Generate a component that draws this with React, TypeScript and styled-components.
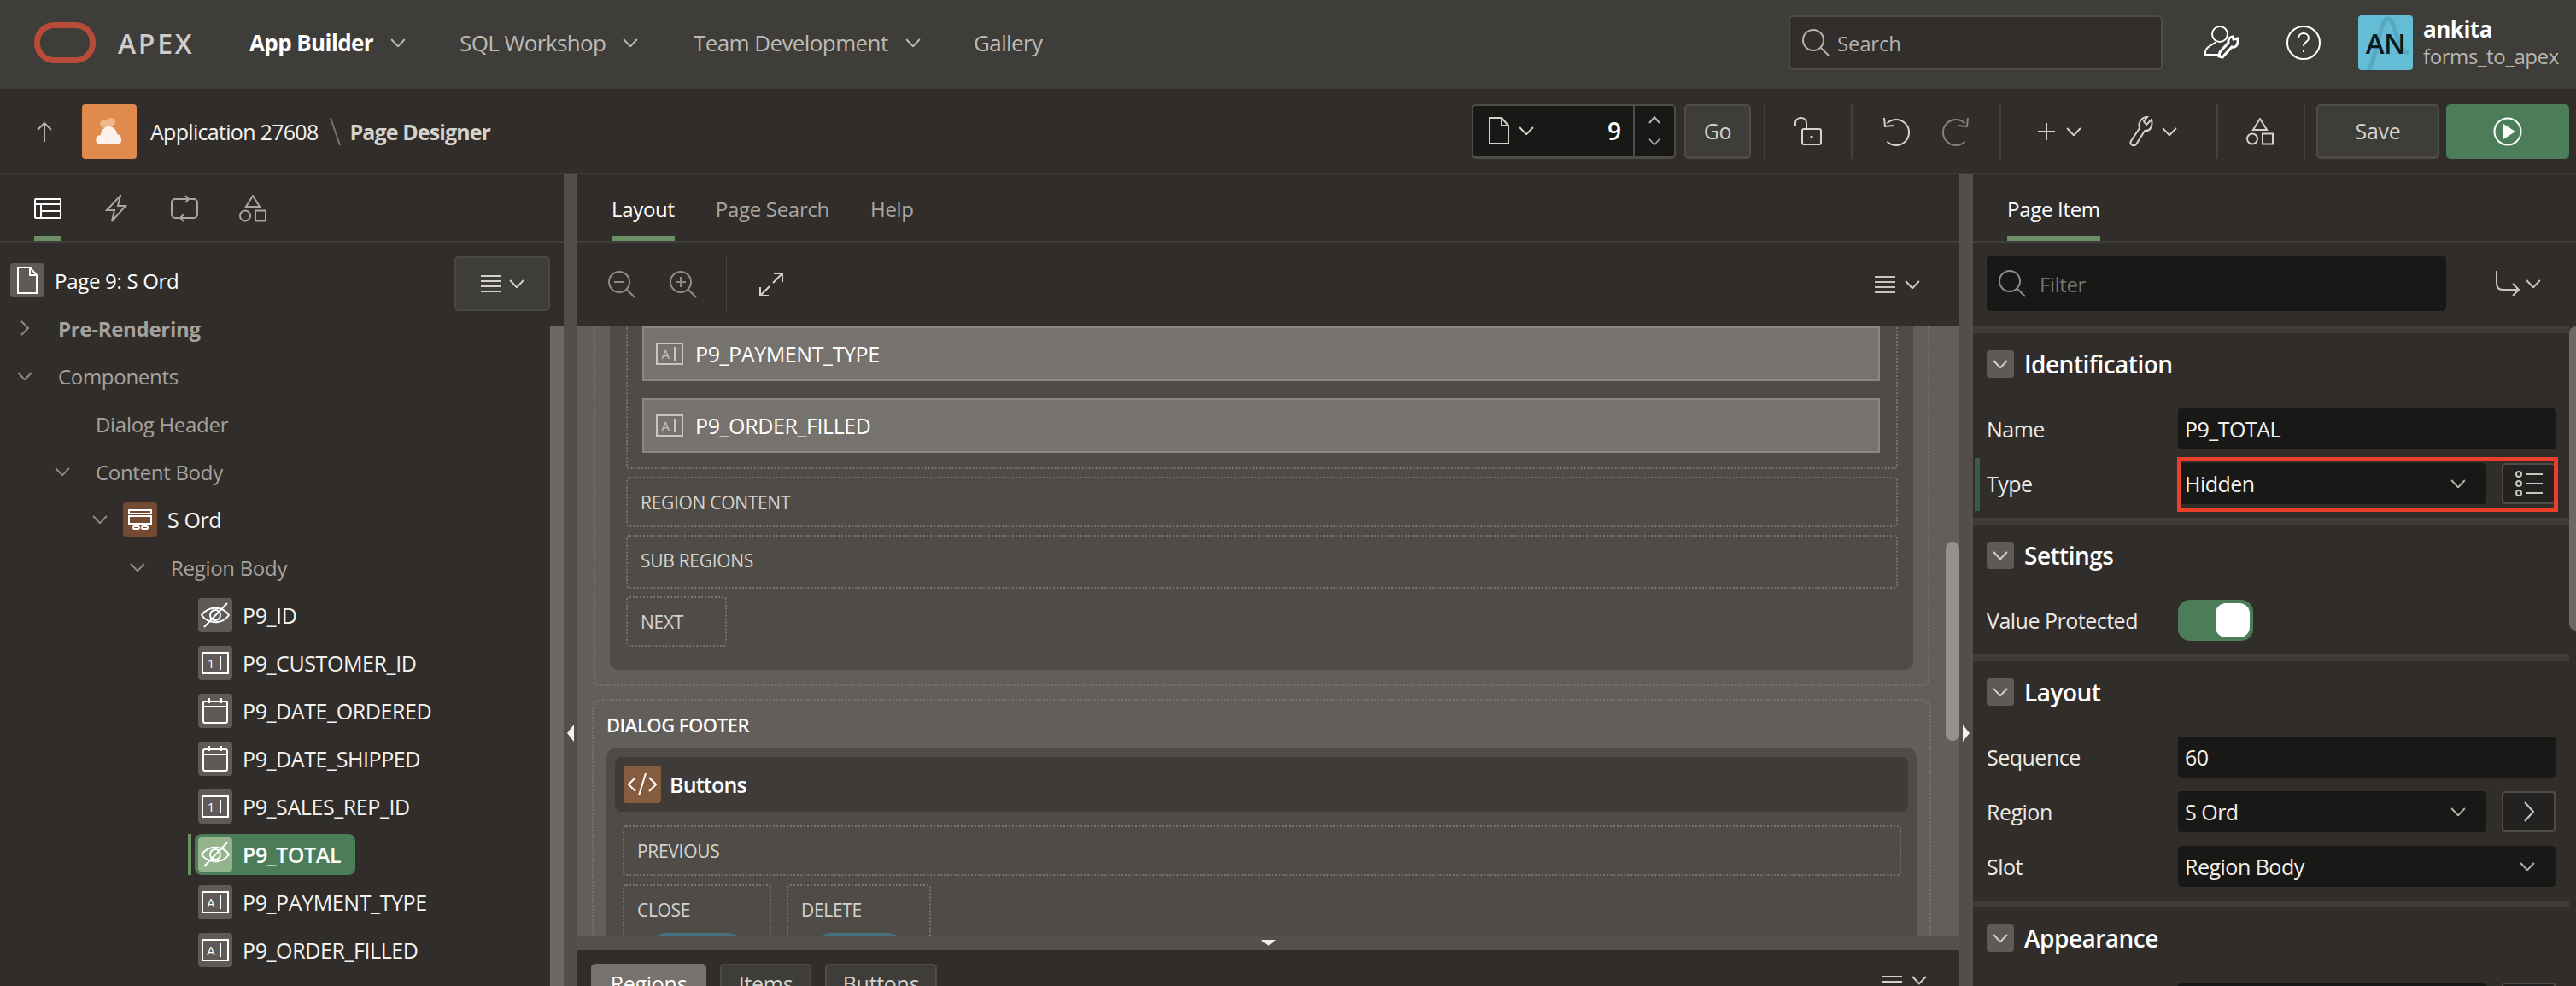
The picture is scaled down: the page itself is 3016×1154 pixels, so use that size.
import React from "react";
import styled, { createGlobalStyle } from "styled-components";

const GlobalStyle = createGlobalStyle`
  html, body { margin: 0; padding: 0; background: #312d2a; }
  body { font-family: "Open Sans", "Noto Sans", sans-serif; }
  * { box-sizing: border-box; }
`;

const Page = styled.div`
  width: 3016px;
  height: 1154px;
  overflow: hidden;
  display: flex;
  flex-direction: column;
  background: #312d2a;
  color: #f2f0ed;
`;

const Ico = styled.svg<{ $ml?: number; $c?: string; $sw?: number }>`
  flex: none;
  display: block;
  fill: none;
  stroke: currentColor;
  stroke-width: ${(p) => p.$sw ?? 2};
  margin-left: ${(p) => p.$ml ?? 0}px;
  color: ${(p) => p.$c ?? "inherit"};
`;

/* header */
const Header = styled.header`
  height: 104px;
  flex: none;
  display: flex;
  align-items: center;
  padding: 0 8px 4px 40px;
  background: #3f3d39;
`;
const Wordmark = styled.div`
  margin-left: 26px;
  width: 154px;
  font-size: 32px;
  font-weight: 600;
  letter-spacing: 2.7px;
  color: #cfccc8;
`;
const NavItem = styled.div<{ $w: number; $active?: boolean }>`
  width: ${(p) => p.$w}px;
  display: flex;
  align-items: center;
  font-size: 26px;
  letter-spacing: -0.6px;
  font-weight: ${(p) => (p.$active ? 700 : 400)};
  color: ${(p) => (p.$active ? "#ffffff" : "#bcb9b5")};
  white-space: nowrap;
`;
const HeaderSearch = styled.div`
  margin-left: auto;
  width: 438px;
  height: 64px;
  display: flex;
  align-items: center;
  padding-left: 14px;
  gap: 9px;
  background: #312e2b;
  border: 2px solid #4f4c48;
  border-radius: 5px;
  font-size: 24px;
  letter-spacing: -0.2px;
  color: #b5b2ae;
`;
const Avatar = styled.div`
  position: relative;
  overflow: hidden;
  width: 64px;
  height: 64px;
  margin-left: 44px;
  display: flex;
  align-items: center;
  justify-content: center;
  border-radius: 4px;
  background: #63bdd7;
  color: #071a22;
  font-size: 33px;
  font-weight: 600;
  letter-spacing: -0.5px;
`;
const AvatarWave = styled.svg`
  position: absolute;
  inset: 0;
  fill: none;
  stroke: #58a9c0;
  stroke-width: 5;
`;
const AvatarInitials = styled.span`
  position: relative;
`;
const UserBlock = styled.div`
  margin-left: 12px;
  display: flex;
  flex-direction: column;
  width: 171px;
`;
const UserName = styled.div`
  font-size: 26px;
  line-height: 32px;
  font-weight: 700;
  letter-spacing: -0.5px;
  color: #fff;
`;
const UserApp = styled.div`
  font-size: 24px;
  line-height: 32px;
  letter-spacing: -0.4px;
  color: #b9b6b2;
`;

/* toolbar */
const Toolbar = styled.div`
  height: 100px;
  flex: none;
  display: flex;
  align-items: center;
  padding: 2px 8px 0 0;
  border-bottom: 2px solid #3f3d39;
  color: #d5d2ce;
`;
const AppTile = styled.div`
  width: 64px;
  height: 64px;
  margin-left: 34px;
  display: flex;
  align-items: center;
  justify-content: center;
  background: #e08a4e;
  border-radius: 4px;
`;
const Crumb = styled.div<{ $bold?: boolean; $ml: number }>`
  margin-left: ${(p) => p.$ml}px;
  font-size: 25px;
  letter-spacing: ${(p) => (p.$bold ? -0.9 : -0.7)}px;
  font-weight: ${(p) => (p.$bold ? 700 : 400)};
  color: ${(p) => (p.$bold ? "#d5d2ce" : "#f5f3f0")};
  white-space: nowrap;
`;
const Finder = styled.div`
  margin-left: auto;
  width: 239px;
  height: 64px;
  display: flex;
  align-items: center;
  padding-left: 18px;
  background: #181816;
  border: 2px solid #4f4c48;
  border-bottom-width: 4px;
  border-radius: 5px;
`;
const FinderValue = styled.div`
  flex: 1;
  padding-right: 14px;
  text-align: right;
  font-size: 28px;
  font-weight: 600;
  color: #fff;
`;
const FinderSpin = styled.div`
  width: 48px;
  align-self: stretch;
  display: flex;
  flex-direction: column;
  align-items: center;
  justify-content: space-between;
  padding: 12px 0;
  border-left: 2px solid #4f4c48;
  color: #b5b2ae;
`;
const ToolButton = styled.div<{ $w: number; $ml: number }>`
  width: ${(p) => p.$w}px;
  height: 64px;
  margin-left: ${(p) => p.$ml}px;
  display: flex;
  align-items: center;
  justify-content: center;
  flex: none;
  border: 2px solid #4f4c48;
  border-bottom-width: 4px;
  border-radius: 5px;
  background: #3f3d39;
  color: #d5d2ce;
  font-size: 25px;
  font-weight: 500;
  letter-spacing: -0.3px;
`;
const RunButton = styled.div`
  width: 144px;
  height: 64px;
  margin-left: 8px;
  display: flex;
  align-items: center;
  justify-content: center;
  flex: none;
  border-radius: 5px;
  background: #4b7d58;
  color: #fff;
`;
const ToolSep = styled.div<{ $ml: number }>`
  width: 2px;
  height: 64px;
  flex: none;
  margin-left: ${(p) => p.$ml}px;
  background: #45423e;
`;

/* body */
const Body = styled.div`
  flex: 1;
  min-height: 0;
  display: flex;
`;
const Splitter = styled.div`
  position: relative;
  width: 16px;
  flex: none;
  background: #524f4b;
`;
const CaretLeft = styled.div`
  position: absolute;
  top: 644px;
  left: 4px;
  border: 10px solid transparent;
  border-left: 0;
  border-right: 8px solid #f2f0ed;
`;
const CaretRight = styled.div`
  position: absolute;
  top: 644px;
  left: 4px;
  border: 10px solid transparent;
  border-right: 0;
  border-left: 8px solid #f2f0ed;
`;

const Panel = styled.section<{ $w?: number }>`
  position: relative;
  display: flex;
  flex-direction: column;
  min-width: 0;
  ${(p) => (p.$w ? `width: ${p.$w}px; flex: none;` : "flex: 1;")}
`;
const TabBar = styled.div`
  height: 80px;
  flex: none;
  display: flex;
  gap: 48px;
  padding-left: 40px;
  border-bottom: 2px solid #3f3d39;
`;
const Tab = styled.div<{ $active?: boolean }>`
  position: relative;
  height: 78px;
  padding-top: 2px;
  display: flex;
  align-items: center;
  font-size: 24px;
  letter-spacing: -0.3px;
  color: ${(p) => (p.$active ? "#fff" : "#a9a6a2")};
  ${(p) =>
    p.$active &&
    `&::after { content: ""; position: absolute; left: 0; right: 0; bottom: 0; height: 6px; background: #6d8f66; }`}
`;
const PanelBar = styled.div`
  height: 98px;
  flex: none;
  display: flex;
  align-items: center;
  padding: 0 46px 0 36px;
  color: #c9c6c2;
`;
const BarSep = styled.div`
  width: 2px;
  height: 64px;
  margin-left: 34px;
  background: #45423e;
`;

/* tree */
const Tree = styled.div`
  position: relative;
  flex: 1;
  min-height: 0;
  padding-top: 16px;
  padding-right: 16px;
  overflow: hidden;
`;
const TreeTrack = styled.div`
  position: absolute;
  top: 98px;
  right: 0;
  bottom: 0;
  width: 16px;
  background: #6b6865;
`;
const TreeMenu = styled.div`
  position: absolute;
  top: 16px;
  left: 532px;
  width: 112px;
  height: 64px;
  display: flex;
  align-items: center;
  justify-content: center;
  gap: 9px;
  background: #3f3d39;
  border: 2px solid #4a4845;
  border-radius: 5px;
  color: #d5d2ce;
`;
const PageRow = styled.div`
  height: 56px;
  display: flex;
  align-items: center;
  gap: 12px;
  padding-left: 12px;
  font-size: 24px;
  letter-spacing: -0.3px;
  color: #fff;
`;
const TreeRow = styled.div<{ $depth: number }>`
  height: 56px;
  display: flex;
  align-items: center;
  padding-left: ${(p) => 20 + p.$depth * 44}px;
  color: #8f8c88;
`;
const ChevronSlot = styled.div`
  width: 20px;
  flex: none;
  margin-right: 16px;
`;
const TreeLabel = styled.div`
  font-size: 25px;
  letter-spacing: -0.4px;
  white-space: nowrap;
  margin-left: 12px;
  color: #f5f3f0;
`;
const TreeGroup = styled(TreeLabel)<{ $bold?: boolean }>`
  font-size: 24px;
  letter-spacing: -0.3px;
  color: #a5a29e;
  font-weight: ${(p) => (p.$bold ? 700 : 400)};
`;
const IconTile = styled.div<{ $bg?: string }>`
  width: 40px;
  height: 40px;
  flex: none;
  display: flex;
  align-items: center;
  justify-content: center;
  border-radius: 4px;
  color: #fff;
  background: ${(p) => p.$bg ?? "#5d5a57"};
`;
const SelectedItem = styled.div`
  position: relative;
  width: 188px;
  height: 48px;
  margin-left: -4px;
  display: flex;
  align-items: center;
  padding-left: 4px;
  border-radius: 8px;
  background: #4b7d58;
  &::before {
    content: "";
    position: absolute;
    left: -8px;
    top: 0;
    bottom: 0;
    width: 4px;
    background: #6d8f66;
  }
`;
const SelectedLabel = styled(TreeLabel)`
  font-weight: 600;
  color: #fff;
`;

/* canvas */
const Canvas = styled.div`
  position: relative;
  flex: 1;
  min-height: 0;
  overflow: hidden;
  padding: 0 33px 0 17px;
  background: #625e59;
`;
const CanvasThumb = styled.div`
  position: absolute;
  top: 252px;
  right: 0;
  width: 16px;
  height: 233px;
  border-radius: 8px;
  background: #95908c;
`;
const BodyOutline = styled.div`
  margin: 0 2px;
  padding: 0 17px 17px;
  border: 2px dotted #77746f;
  border-top: 0;
  border-radius: 0 0 8px 8px;
`;
const RegionPanel = styled.div`
  padding: 0 18px 27px 19px;
  background: #4f4c48;
  border-radius: 0 0 10px 10px;
`;
const SlotBox = styled.div<{ $h?: number; $w?: number }>`
  height: ${(p) => p.$h ?? 59}px;
  ${(p) => (p.$w ? `width: ${p.$w}px;` : "")}
  margin-top: 9px;
  padding: 13px 15px 0;
  line-height: 30px;
  border: 2px dotted #77746f;
  border-radius: 4px;
  font-size: 21px;
  letter-spacing: -0.3px;
  color: #d5d2ce;
`;
const ItemsBox = styled.div`
  display: flex;
  flex-direction: column;
  gap: 20px;
  padding: 0 19px 17px 17px;
  border: 2px dotted #77746f;
  border-top: 0;
  border-radius: 0 0 4px 4px;
`;
const ItemRow = styled.div`
  height: 64px;
  display: flex;
  align-items: center;
  gap: 14px;
  padding-left: 14px;
  background: #76726d;
  border: 2px solid #8b8783;
  font-size: 25px;
  letter-spacing: -0.4px;
  color: #fff;
`;
const FooterOutline = styled.div`
  margin-top: 15px;
  padding: 0 15px;
  height: 400px;
  border: 2px dotted #77746f;
  border-bottom: 0;
  border-radius: 12px 12px 0 0;
`;
const FooterTitle = styled.div`
  height: 56px;
  display: flex;
  align-items: center;
  font-size: 22px;
  font-weight: 600;
  letter-spacing: -0.5px;
  color: #fff;
`;
const FooterPanel = styled.div`
  padding: 10px 18px 0 19px;
  height: 340px;
  background: #4f4c48;
  border-radius: 10px 10px 0 0;
`;
const RegionHead = styled.div`
  height: 64px;
  margin: 0 -8px 16px -9px;
  display: flex;
  align-items: center;
  padding-left: 10px;
  gap: 10px;
  background: #3e3b38;
  border-radius: 8px;
  font-size: 25px;
  font-weight: 600;
  letter-spacing: -0.8px;
  color: #fff;
`;
const CodeTile = styled.div`
  width: 44px;
  height: 44px;
  display: flex;
  align-items: center;
  justify-content: center;
  background: #865c3e;
  border-radius: 4px;
  color: #fff;
`;
const ButtonSlots = styled.div`
  display: flex;
  gap: 18px;
`;
const BlueButton = styled.div<{ $w: number }>`
  width: ${(p) => p.$w}px;
  height: 40px;
  margin: 12px auto 0;
  border-radius: 20px;
  background: #46707f;
`;
const PreviewSlot = styled(SlotBox)`
  margin-top: 0;
  margin-bottom: 10px;
`;
const ButtonSlot = styled(PreviewSlot)<{ $w: number }>`
  width: ${(p) => p.$w}px;
  height: 140px;
`;

const HSplitter = styled.div`
  position: relative;
  height: 16px;
  flex: none;
  background: #54514c;
  display: flex;
  justify-content: center;
`;
const CaretDown = styled.div`
  margin-top: 4px;
  height: 0;
  border: 9px solid transparent;
  border-bottom: 0;
  border-top: 7px solid #f2f0ed;
`;
const BottomBar = styled.div`
  height: 42px;
  flex: none;
  overflow: hidden;
  display: flex;
  padding: 16px 38px 0 16px;
  background: #312d2a;
`;
const BottomTab = styled.div<{ $w: number; $active?: boolean }>`
  width: ${(p) => p.$w}px;
  height: 64px;
  margin-right: 16px;
  text-align: center;
  border-radius: 5px;
  font-size: 25px;
  letter-spacing: -0.3px;
  line-height: 42px;
  color: ${(p) => (p.$active ? "#fff" : "#d5d2ce")};
  background: ${(p) => (p.$active ? "#76726d" : "#3f3d39")};
  border: 2px solid ${(p) => (p.$active ? "#76726d" : "#4f4c48")};
`;
const BottomMenu = styled.div`
  margin-left: auto;
  padding-top: 14px;
  display: flex;
  gap: 11px;
  color: #d5d2ce;
`;

/* properties */
const FilterRow = styled.div`
  height: 98px;
  flex: none;
  display: flex;
  align-items: flex-start;
  padding: 16px 0 0 16px;
  color: #c9c6c2;
`;
const FilterInput = styled.div`
  width: 538px;
  height: 64px;
  display: flex;
  align-items: center;
  gap: 16px;
  padding-left: 14px;
  border-radius: 4px;
  background: #181816;
  font-size: 24px;
  letter-spacing: -0.4px;
  color: #77746f;
`;
const FilterMenu = styled.div`
  height: 64px;
  margin-left: 58px;
  display: flex;
  align-items: center;
  gap: 7px;
`;
const Props = styled.div`
  position: relative;
  flex: 1;
  min-height: 0;
  overflow: hidden;
  padding-right: 8px;
`;
const PropsThumb = styled.div`
  position: absolute;
  top: 0;
  right: 0;
  width: 8px;
  height: 356px;
  border-radius: 8px 0 0 8px;
  background: #6b6865;
`;
const Section = styled.div`
  padding: 20px 0 16px 16px;
  border-top: 8px solid #3f3d39;
  display: flex;
  flex-direction: column;
  gap: 16px;
`;
const SectionHead = styled.div`
  height: 32px;
  margin-bottom: 20px;
  display: flex;
  align-items: center;
  gap: 12px;
  font-size: 28px;
  font-weight: 600;
  letter-spacing: -0.5px;
  color: #fff;
`;
const Collapse = styled.div`
  width: 32px;
  height: 32px;
  display: flex;
  align-items: center;
  justify-content: center;
  border-radius: 4px;
  background: #5d5a57;
  color: #d5d2ce;
`;
const PropRow = styled.div<{ $marked?: boolean }>`
  position: relative;
  height: 48px;
  display: grid;
  grid-template-columns: 224px 442px;
  align-items: center;
  font-size: 25px;
  letter-spacing: -0.5px;
  color: #ece9e6;
  ${(p) =>
    p.$marked &&
    `&::before { content: ""; position: absolute; left: -14px; top: -6px; bottom: -8px; width: 6px; background: #3b5c42; }`}
`;
const Field = styled.div`
  position: relative;
  display: flex;
  gap: 18px;
  height: 48px;
`;
const Input = styled.div`
  flex: 1;
  display: flex;
  align-items: center;
  justify-content: space-between;
  padding: 0 24px 0 8px;
  background: #181816;
  border-radius: 4px;
  color: #f2f0ed;
`;
const FieldButton = styled.div`
  width: 63px;
  flex: none;
  display: flex;
  align-items: center;
  justify-content: center;
  border: 2px solid #4f4c48;
  border-radius: 4px;
  background: #232220;
  color: #c9c6c2;
`;
const RedBox = styled.div`
  position: absolute;
  inset: -7px -3px -9px -1px;
  border: 5px solid #e8402a;
`;
const Toggle = styled.div`
  width: 88px;
  height: 48px;
  padding: 4px;
  display: flex;
  justify-content: flex-end;
  border-radius: 14px;
  background: #4b7d58;
`;
const Knob = styled.div`
  width: 40px;
  height: 40px;
  border-radius: 12px;
  background: #fff;
`;

/* icons */
const Chevron = ({ w = 18, ml, c }: { w?: number; ml?: number; c?: string }) => (
  <Ico width={w} height={w * 0.6} viewBox="0 0 18 11" $ml={ml} $c={c}>
    <path d="M1 1l8 8.5L17 1" />
  </Ico>
);
const ChevronUp = () => (
  <Ico width={14} height={9} viewBox="0 0 14 9">
    <path d="M1 8l6-7 6 7" />
  </Ico>
);
const ChevronRight = () => (
  <Ico width={11} height={18} viewBox="0 0 11 18" $ml={4} $c="#8f8c88">
    <path d="M1 1l8 8-8 8" />
  </Ico>
);
const SearchIcon = ({ dim }: { dim?: boolean }) => (
  <Ico width={32} height={32} viewBox="0 0 32 32" $c={dim ? "#8f8c88" : "#b5b2ae"}>
    <circle cx="13" cy="13" r="12" />
    <path d="M22 22l9 9" />
  </Ico>
);
const Lines = ({ ml }: { ml?: number }) => (
  <Ico width={24} height={20} viewBox="0 0 24 20" $ml={ml}>
    <path d="M0 1h24M0 7h24M0 13h24M0 19h24" />
  </Ico>
);
const DocIcon = () => (
  <Ico width={24} height={32} viewBox="0 0 24 32">
    <path d="M1 1h14l8 9v21H1zM15 1v9h8" />
  </Ico>
);
const Shapes = ({ c, ml }: { c?: string; ml?: number }) => (
  <Ico width={32} height={32} viewBox="0 0 32 32" $c={c} $ml={ml}>
    <path d="M16 1l8 13H8z" />
    <circle cx="7" cy="24.5" r="6" />
    <rect x="19" y="18.5" width="12" height="12" />
  </Ico>
);
const Eye = () => (
  <Ico width={34} height={30} viewBox="0 0 34 30">
    <path d="M1 15c8-11 24-11 32 0-8 11-24 11-32 0z" />
    <circle cx="17" cy="15" r="6" />
    <path d="M4 29L31 1" />
  </Ico>
);
const Calendar = () => (
  <Ico width={30} height={30} viewBox="0 0 30 30">
    <rect x="1" y="4" width="28" height="25" rx="2" />
    <path d="M1 10h28M8 0v6M22 0v6" />
  </Ico>
);
const FieldGlyph = ({ ch, c }: { ch: string; c?: string }) => (
  <Ico width={32} height={26} viewBox="0 0 32 26" $c={c}>
    <rect x="1" y="1" width="30" height="24" />
    <text x="11" y="18.5" textAnchor="middle" fontSize="15" fontFamily="Open Sans" fill="currentColor" stroke="none">
      {ch}
    </text>
    <path d="M22 5v16" />
  </Ico>
);
const RegionGlyph = () => (
  <Ico width={28} height={24} viewBox="0 0 28 24" $c="#fff">
    <rect x="1" y="1" width="26" height="4" />
    <rect x="1" y="8" width="26" height="9" />
    <rect x="6" y="20" width="7" height="3" rx="1.5" />
    <rect x="16" y="20" width="7" height="3" rx="1.5" />
  </Ico>
);
const ZoomIcon = ({ plus }: { plus?: boolean }) => (
  <Ico width={32} height={32} viewBox="0 0 32 32" $ml={plus ? 40 : 0} $c="#8f8c88">
    <circle cx="13" cy="13" r="12" />
    <path d={plus ? "M7 13h12M13 7v12M22 22l9 9" : "M7 13h12M22 22l9 9"} />
  </Ico>
);

const treeItems: { name: string; kind: "eye" | "num" | "date" | "text"; selected?: boolean }[] = [
  { name: "P9_ID", kind: "eye" },
  { name: "P9_CUSTOMER_ID", kind: "num" },
  { name: "P9_DATE_ORDERED", kind: "date" },
  { name: "P9_DATE_SHIPPED", kind: "date" },
  { name: "P9_SALES_REP_ID", kind: "num" },
  { name: "P9_TOTAL", kind: "eye", selected: true },
  { name: "P9_PAYMENT_TYPE", kind: "text" },
  { name: "P9_ORDER_FILLED", kind: "text" },
];

const glyphFor = (kind: string) => {
  if (kind === "eye") return <Eye />;
  if (kind === "date") return <Calendar />;
  return <FieldGlyph ch={kind === "num" ? "1" : "A"} />;
};

export default function App() {
  return (
    <Page>
      <GlobalStyle />
      <Header>
        <Ico width={72} height={48} viewBox="0 0 72 48" $c="#b94c39" $sw={7}>
          <rect x="3.5" y="3.5" width="65" height="41" rx="20" />
        </Ico>
        <Wordmark>APEX</Wordmark>
        <NavItem $w={246} $active>
          App Builder
          <Chevron ml={20} c="#bcb9b5" />
        </NavItem>
        <NavItem $w={274}>
          SQL Workshop
          <Chevron ml={20} />
        </NavItem>
        <NavItem $w={328}>
          Team Development
          <Chevron ml={20} />
        </NavItem>
        <NavItem $w={100}>Gallery</NavItem>
        <HeaderSearch>
          <SearchIcon />
          Search
        </HeaderSearch>
        <Ico width={42} height={40} viewBox="0 0 42 40" $ml={48} $c="#fff">
          <circle cx="19" cy="10" r="9" />
          <path d="M14 19c-1 3-12 5-12 12v3h18" />
          <path d="M40 15l-5 1-1-3c-3 0-6 3-5 7L19 31l-1 5 4 1 11-12c4 1 7-2 7-6z" strokeWidth={3} />
        </Ico>
        <Ico width={40} height={40} viewBox="0 0 40 40" $ml={55} $c="#fff">
          <circle cx="20" cy="20" r="19" />
          <path d="M14 15c0-8 12-8 12 0 0 4-6 4-6 9M20 28v3" />
        </Ico>
        <Avatar>
          <AvatarWave viewBox="0 0 64 64">
            <path d="M10 70C25 40 25 4 35 4s8 40 25 40" />
          </AvatarWave>
          <AvatarInitials>AN</AvatarInitials>
        </Avatar>
        <UserBlock>
          <UserName>ankita</UserName>
          <UserApp>forms_to_apex</UserApp>
        </UserBlock>
      </Header>

      <Toolbar>
        <Ico width={20} height={24} viewBox="0 0 20 24" $ml={42} $c="#b5b2ae">
          <path d="M10 24V2M2 10l8-8 8 8" />
        </Ico>
        <AppTile>
          <Ico width={32} height={36} viewBox="0 0 32 36">
            <circle cx="10" cy="9" r="5" fill="#f0b78c" stroke="none" />
            <circle cx="18" cy="7" r="5" fill="#f0b78c" stroke="none" />
            <path
              d="M6 33c-8 0-7-11 0-11 0-7 6-10 10-10s9 4 9 9c7 1 7 12 0 12z"
              fill="#fdf3ec"
              stroke="none"
            />
          </Ico>
        </AppTile>
        <Crumb $ml={16}>Application 27608</Crumb>
        <Ico width={13} height={32} viewBox="0 0 13 32" $ml={13} $c="#77746f">
          <path d="M1 0l11 32" />
        </Ico>
        <Crumb $bold $ml={11}>
          Page Designer
        </Crumb>
        <Finder>
          <DocIcon />
          <Chevron ml={11} />
          <FinderValue>9</FinderValue>
          <FinderSpin>
            <ChevronUp />
            <Chevron w={14} />
          </FinderSpin>
        </Finder>
        <ToolButton $w={78} $ml={10}>
          Go
        </ToolButton>
        <ToolSep $ml={15} />
        <Ico width={34} height={34} viewBox="0 0 34 34" $ml={33}>
          <path d="M2 11V7c0-8 13-8 13 0v6" />
          <rect x="10" y="14" width="22" height="18" rx="2" />
          <path d="M21 22v2" strokeWidth={3} />
        </Ico>
        <ToolSep $ml={33} />
        <Ico width={32} height={34} viewBox="0 0 32 34" $ml={35}>
          <path d="M5.4 7.4A15 15 0 1 1 5.4 28.6M2 1l1 10 10-1" />
        </Ico>
        <Ico width={32} height={34} viewBox="0 0 32 34" $ml={38} $c="#85827e">
          <path d="M26.6 7.4A15 15 0 1 0 26.6 28.6M30 1l-1 10-10-1" />
        </Ico>
        <ToolSep $ml={35} />
        <Ico width={20} height={20} viewBox="0 0 20 20" $ml={43}>
          <path d="M0 10h20M10 0v20" />
        </Ico>
        <Chevron ml={13} />
        <Ico width={28} height={36} viewBox="0 0 28 36" $ml={56}>
          <path d="M26 4l-6 6-3-4 4-5C14 1 10 8 12 14L2 29c-2 4 3 7 6 4l10-16c6 1 10-5 8-13z" />
        </Ico>
        <Chevron ml={10} />
        <ToolSep $ml={46} />
        <Shapes c="#d5d2ce" ml={33} />
        <ToolSep $ml={35} />
        <ToolButton $w={144} $ml={13}>
          Save
        </ToolButton>
        <RunButton>
          <Ico width={34} height={34} viewBox="0 0 34 34" $c="#fff">
            <circle cx="17" cy="17" r="15.5" />
            <path d="M12 8l14 9-14 9z" fill="#fff" stroke="none" />
          </Ico>
        </RunButton>
      </Toolbar>

      <Body>
        <Panel $w={660}>
          <TabBar>
            <Tab $active>
              <Ico width={32} height={24} viewBox="0 0 32 24" $c="#fff">
                <rect x="1" y="1" width="30" height="22" rx="1" />
                <path d="M1 7h30M8 7v16M8 15h23" />
              </Ico>
            </Tab>
            <Tab>
              <Ico width={32} height={32} viewBox="0 0 32 32" $c="#a9a6a2">
                <path d="M21 1L5 18h9l-3 13 16-18h-9z" />
              </Ico>
            </Tab>
            <Tab>
              <Ico width={32} height={32} viewBox="0 0 32 32" $c="#a9a6a2">
                <path d="M10 27H5a4 4 0 0 1-4-4V9a4 4 0 0 1 4-4h16M17 1l4 4-4 4M22 5h5a4 4 0 0 1 4 4v14a4 4 0 0 1-4 4H11M15 31l-4-4 4-4" />
              </Ico>
            </Tab>
            <Tab>
              <Shapes c="#a9a6a2" />
            </Tab>
          </TabBar>
          <Tree>
            <PageRow>
              <IconTile>
                <DocIcon />
              </IconTile>
              Page 9: S Ord
            </PageRow>
            <TreeMenu>
              <Lines />
              <Chevron />
            </TreeMenu>
            <TreeRow $depth={0}>
              <ChevronSlot>
                <ChevronRight />
              </ChevronSlot>
              <TreeGroup $bold>Pre-Rendering</TreeGroup>
            </TreeRow>
            <TreeRow $depth={0}>
              <ChevronSlot>
                <Chevron />
              </ChevronSlot>
              <TreeGroup>Components</TreeGroup>
            </TreeRow>
            <TreeRow $depth={1}>
              <ChevronSlot />
              <TreeGroup>Dialog Header</TreeGroup>
            </TreeRow>
            <TreeRow $depth={1}>
              <ChevronSlot>
                <Chevron />
              </ChevronSlot>
              <TreeGroup>Content Body</TreeGroup>
            </TreeRow>
            <TreeRow $depth={2}>
              <ChevronSlot>
                <Chevron />
              </ChevronSlot>
              <IconTile $bg="#744a32">
                <RegionGlyph />
              </IconTile>
              <TreeLabel>S Ord</TreeLabel>
            </TreeRow>
            <TreeRow $depth={3}>
              <ChevronSlot>
                <Chevron />
              </ChevronSlot>
              <TreeGroup>Region Body</TreeGroup>
            </TreeRow>
            {treeItems.map((item) => (
              <TreeRow key={item.name} $depth={4}>
                <ChevronSlot />
                {item.selected ? (
                  <SelectedItem>
                    <IconTile $bg="#93b48c">{glyphFor(item.kind)}</IconTile>
                    <SelectedLabel>{item.name}</SelectedLabel>
                  </SelectedItem>
                ) : (
                  <>
                    <IconTile>{glyphFor(item.kind)}</IconTile>
                    <TreeLabel>{item.name}</TreeLabel>
                  </>
                )}
              </TreeRow>
            ))}
            <TreeTrack />
          </Tree>
        </Panel>

        <Splitter>
          <CaretLeft />
        </Splitter>

        <Panel>
          <TabBar>
            <Tab $active>Layout</Tab>
            <Tab>Page Search</Tab>
            <Tab>Help</Tab>
          </TabBar>
          <PanelBar>
            <ZoomIcon />
            <ZoomIcon plus />
            <BarSep />
            <Ico width={28} height={28} viewBox="0 0 28 28" $ml={38} $c="#d5d2ce">
              <path d="M17 1h10v10M27 1L16 12M11 27H1V17M1 27l11-11" />
            </Ico>
            <Lines ml={1278} />
            <Chevron ml={11} c="#d5d2ce" />
          </PanelBar>
          <Canvas>
            <BodyOutline>
              <RegionPanel>
                <ItemsBox>
                  <ItemRow>
                    <FieldGlyph ch="A" c="#c9c6c2" />
                    P9_PAYMENT_TYPE
                  </ItemRow>
                  <ItemRow>
                    <FieldGlyph ch="A" c="#c9c6c2" />
                    P9_ORDER_FILLED
                  </ItemRow>
                </ItemsBox>
                <SlotBox>REGION CONTENT</SlotBox>
                <SlotBox $h={63}>SUB REGIONS</SlotBox>
                <SlotBox $w={118}>NEXT</SlotBox>
              </RegionPanel>
            </BodyOutline>
            <FooterOutline>
              <FooterTitle>DIALOG FOOTER</FooterTitle>
              <FooterPanel>
                <RegionHead>
                  <CodeTile>
                    <Ico width={34} height={30} viewBox="0 0 34 30">
                      <path d="M9 7l-8 8 8 8M25 7l8 8-8 8M21 2l-8 26" />
                    </Ico>
                  </CodeTile>
                  Buttons
                </RegionHead>
                <PreviewSlot>PREVIOUS</PreviewSlot>
                <ButtonSlots>
                  <ButtonSlot $w={174}>
                    CLOSE
                    <BlueButton $w={112} />
                  </ButtonSlot>
                  <ButtonSlot $w={169}>
                    DELETE
                    <BlueButton $w={106} />
                  </ButtonSlot>
                </ButtonSlots>
              </FooterPanel>
            </FooterOutline>
            <CanvasThumb />
          </Canvas>
          <HSplitter>
            <CaretDown />
          </HSplitter>
          <BottomBar>
            <BottomTab $w={135} $active>
              Regions
            </BottomTab>
            <BottomTab $w={107}>Items</BottomTab>
            <BottomTab $w={131}>Buttons</BottomTab>
            <BottomMenu>
              <Lines />
              <Chevron />
            </BottomMenu>
          </BottomBar>
        </Panel>

        <Splitter>
          <CaretRight />
        </Splitter>

        <Panel $w={706}>
          <TabBar>
            <Tab $active>Page Item</Tab>
          </TabBar>
          <FilterRow>
            <FilterInput>
              <SearchIcon dim />
              Filter
            </FilterInput>
            <FilterMenu>
              <Ico width={28} height={30} viewBox="0 0 28 30">
                <path d="M1 0v14c0 6 3 8 7 8h19M20 15l7 7-7 7" />
              </Ico>
              <Chevron />
            </FilterMenu>
          </FilterRow>
          <Props>
            <Section>
              <SectionHead>
                <Collapse>
                  <Chevron />
                </Collapse>
                Identification
              </SectionHead>
              <PropRow>
                <div>Name</div>
                <Field>
                  <Input>P9_TOTAL</Input>
                </Field>
              </PropRow>
              <PropRow $marked>
                <div>Type</div>
                <Field>
                  <Input>
                    Hidden
                    <Chevron c="#b5b2ae" />
                  </Input>
                  <FieldButton>
                    <Ico width={32} height={30} viewBox="0 0 32 30">
                      <circle cx="4" cy="4" r="3" />
                      <circle cx="4" cy="15" r="3" />
                      <circle cx="4" cy="26" r="3" />
                      <path d="M12 4h20M12 15h20M12 26h20" />
                    </Ico>
                  </FieldButton>
                  <RedBox />
                </Field>
              </PropRow>
            </Section>
            <Section>
              <SectionHead>
                <Collapse>
                  <Chevron />
                </Collapse>
                Settings
              </SectionHead>
              <PropRow>
                <div>Value Protected</div>
                <Toggle>
                  <Knob />
                </Toggle>
              </PropRow>
            </Section>
            <Section>
              <SectionHead>
                <Collapse>
                  <Chevron />
                </Collapse>
                Layout
              </SectionHead>
              <PropRow>
                <div>Sequence</div>
                <Field>
                  <Input>60</Input>
                </Field>
              </PropRow>
              <PropRow>
                <div>Region</div>
                <Field>
                  <Input>
                    S Ord
                    <Chevron c="#b5b2ae" />
                  </Input>
                  <FieldButton>
                    <Ico width={12} height={24} viewBox="0 0 12 24">
                      <path d="M1 1l10 11L1 23" />
                    </Ico>
                  </FieldButton>
                </Field>
              </PropRow>
              <PropRow>
                <div>Slot</div>
                <Field>
                  <Input>
                    Region Body
                    <Chevron c="#b5b2ae" />
                  </Input>
                </Field>
              </PropRow>
            </Section>
            <Section>
              <SectionHead>
                <Collapse>
                  <Chevron />
                </Collapse>
                Appearance
              </SectionHead>
              <PropRow>
                <div />
                <Field>
                  <Input />
                  <FieldButton />
                </Field>
              </PropRow>
            </Section>
            <PropsThumb />
          </Props>
        </Panel>
      </Body>
    </Page>
  );
}
